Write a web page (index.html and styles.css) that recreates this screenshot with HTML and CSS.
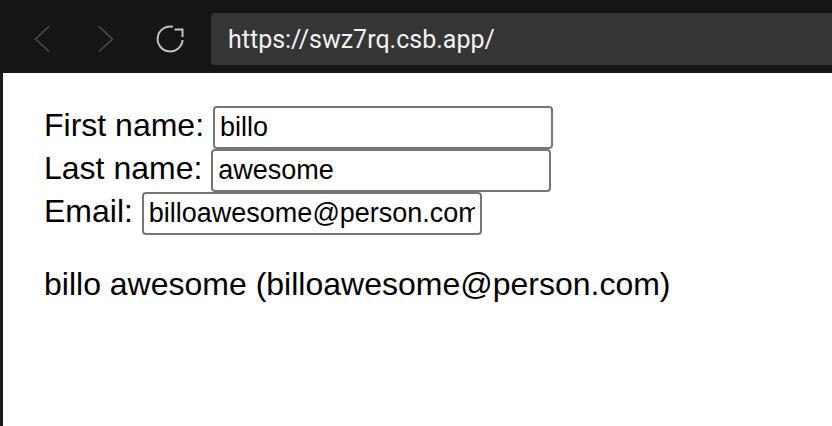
FILE: index.html
```html
<!DOCTYPE html>
<html lang="en">

<head>
  <meta charset="UTF-8">
  <meta name="viewport" content="width=device-width, initial-scale=1.0">
  <title>Form</title>
  <link rel="stylesheet" href="styles.css">
</head>

<body>
  <div class="toolbar">
    <span class="nav-btn">
      <svg width="16" height="26" viewBox="0 0 16 26"><path d="M15 0.5 L1.5 13 L15 25.5" /></svg>
    </span>
    <span class="nav-btn">
      <svg width="16" height="26" viewBox="0 0 16 26"><path d="M1 0.5 L14.5 13 L1 25.5" /></svg>
    </span>
    <span class="nav-btn reload">
      <svg width="30" height="30" viewBox="0 0 30 30">
        <path d="M18 2.8 A 12.5 12.5 0 1 0 27.6 16" />
        <path d="M19.5 5.5 H 27.5 V 13" />
      </svg>
    </span>
    <div class="address">https://swz7rq.csb.app/</div>
  </div>

  <div class="viewport">
    <div class="app">
      <form>
        <div class="row">First name: <input type="text" value="billo"></div>
        <div class="row">Last name: <input type="text" value="awesome"></div>
        <div class="row">Email: <input type="email" value="billoawesome@person.com"></div>
      </form>
      <p class="result">billo awesome (billoawesome@person.com)</p>
    </div>
  </div>
</body>

</html>
```

FILE: styles.css
```css
html,
body {
  margin: 0;
  height: 100%;
}

body {
  background-color: #1b1b1b;
  display: flex;
  flex-direction: column;
  overflow: hidden;
}

.toolbar {
  display: flex;
  align-items: center;
  height: 73px;
  padding: 13px 0 8px 10px;
  box-sizing: border-box;
  background-color: #151515;
}

.nav-btn {
  width: 64px;
  height: 52px;
  display: flex;
  align-items: center;
  justify-content: center;
}

.nav-btn svg path {
  fill: none;
  stroke: #4b4b4b;
  stroke-width: 1.6;
}

.nav-btn.reload svg path {
  stroke: #c4c4c4;
  stroke-width: 2;
}

.address {
  flex: 1;
  height: 52px;
  margin-left: 9px;
  padding-left: 17px;
  display: flex;
  align-items: center;
  background-color: #353535;
  border-radius: 4px 0 0 4px;
  color: #f2f2f2;
  font-family: Roboto, sans-serif;
  font-size: 25px;
}

.viewport {
  flex: 1;
  margin-left: 3px;
  background-color: #fff;
}

.app {
  padding: 33px 0 0 41px;
  font-family: "Liberation Sans", Arial, sans-serif;
  font-size: 32px;
  color: #000;
}

form {
  margin: 0;
}

input {
  font-family: "Liberation Sans", Arial, sans-serif;
  font-size: 27px;
  width: 340px;
  box-sizing: border-box;
  padding: 4px 5px;
  border: 2px solid #767676;
  border-radius: 4px;
  color: #000;
  background: #fff;
}

.result {
  margin: 31px 0 0;
}
```
